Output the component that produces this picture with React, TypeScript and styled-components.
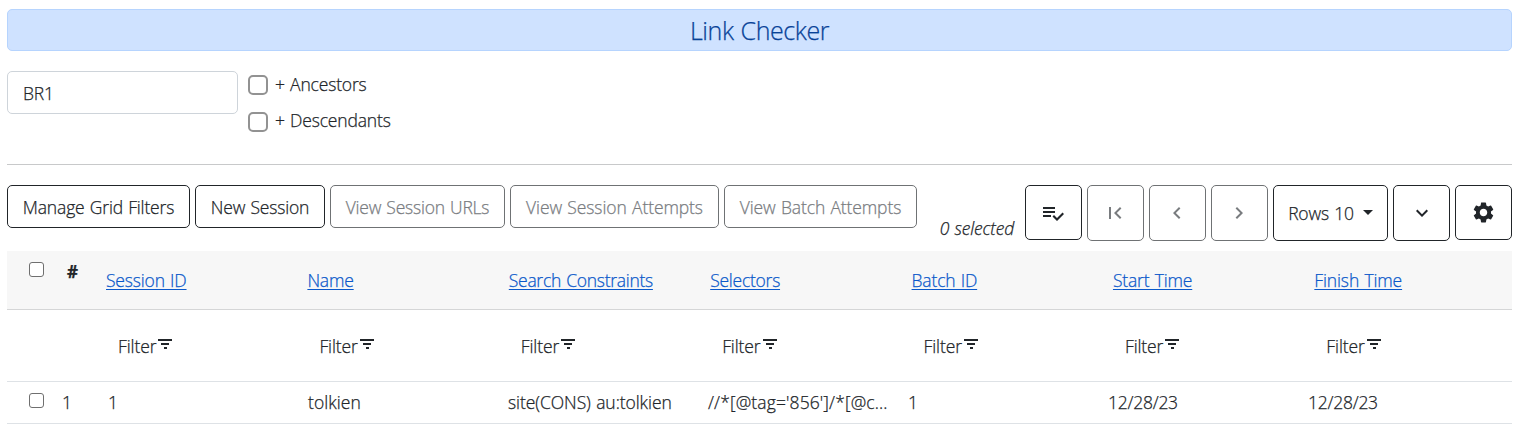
import React from "react";
import styled, { createGlobalStyle } from "styled-components";
import {
  MdFirstPage,
  MdKeyboardArrowLeft,
  MdKeyboardArrowRight,
  MdExpandMore,
  MdSettings,
} from "react-icons/md";

const GlobalStyle = createGlobalStyle`
  *, *::before, *::after { box-sizing: border-box; }
  body {
    margin: 0;
    background: #fff;
    color: #212529;
    font: 300 17.5px/26px "Open Sans", "Noto Sans", sans-serif;
    -webkit-text-stroke: 0.25px currentColor;
  }
  svg { -webkit-text-stroke: 0; }
`;

const Page = styled.main`
  width: 1529px;
  height: 432px;
  padding: 9px 17px 0 7px;
  overflow: hidden;
`;

const Text = styled.span<{ $ls?: number }>`
  white-space: nowrap;
  word-spacing: 0.9px;
  letter-spacing: ${(p) => p.$ls ?? -0.17}px;
`;

const Banner = styled.h1`
  display: flex;
  align-items: center;
  justify-content: center;
  height: 42px;
  margin: 0;
  padding: 0 0 1px;
  border: 1px solid #b6d4fe;
  border-radius: 5px;
  background: #cfe2ff;
  color: #084298;
  font-size: 25px;
  font-weight: 300;
`;

const OrgRow = styled.section`
  display: flex;
  align-items: flex-start;
  gap: 10px;
  height: 113px;
  padding-top: 20px;
`;

const OrgInput = styled.div`
  display: flex;
  align-items: center;
  width: 231px;
  height: 43px;
  padding: 1px 15px 0;
  border: 1px solid #ced4da;
  border-radius: 5px;
`;

const Options = styled.div`
  display: flex;
  flex-direction: column;
  gap: 11px;
  padding-top: 1px;
`;

const Option = styled.label`
  display: flex;
  align-items: center;
  gap: 7px;
  height: 26px;
  ${Text} { margin-top: -2px; }
  & + & ${Text} { margin-top: -4px; }
`;

const BigCheck = styled.i`
  width: 20px;
  height: 20px;
  border: 2px solid #929292;
  border-radius: 5px;
`;

const Toolbar = styled.section`
  display: flex;
  align-items: flex-start;
  gap: 5px;
  height: 87px;
  padding-top: 20px;
  border-top: 1px solid #c8c9ca;
`;

const Button = styled.button<{ $w: number; $h?: number; $muted?: boolean }>`
  display: flex;
  flex: none;
  align-items: center;
  justify-content: center;
  width: ${(p) => p.$w}px;
  height: ${(p) => p.$h ?? 43}px;
  padding: 0;
  border: 1px solid ${(p) => (p.$muted ? "#6f7274" : "#212529")};
  border-radius: 5px;
  background: #fff;
  color: ${(p) => (p.$muted ? "#797c7f" : "#212529")};
  font: inherit;
  -webkit-text-stroke: inherit;
  svg {
    flex: none;
    margin-right: ${(p) => (p.$muted ? 1 : 0)}px;
  }
`;

const Selected = styled.em`
  margin: 30px 6px 0 auto;
`;

const Caret = styled.i`
  margin: -2px 0 0 9px;
  border: 5px solid transparent;
  border-top-color: #212529;
  border-bottom: 0;
`;

const Row = styled.div<{ $h: number; $head?: boolean }>`
  display: flex;
  height: ${(p) => p.$h}px;
  border-bottom: 1px solid ${(p) => (p.$head ? "#d5d6d7" : "#dee2e6")};
  background: ${(p) => (p.$head ? "#f7f7f7" : "#fff")};
`;

const Lead = styled.div<{ $w: number; $x: number; $y: number }>`
  flex: none;
  width: ${(p) => p.$w}px;
  padding: ${(p) => p.$y}px 0 0 ${(p) => p.$x}px;
`;

const Check = styled.i`
  display: block;
  width: 15px;
  height: 15px;
  border: 1px solid #6f6f6f;
  border-radius: 3px;
  background: #fff;
`;

const Cell = styled.div<{ $w: number; $y: number; $x?: number }>`
  display: flex;
  flex: none;
  align-items: flex-start;
  width: ${(p) => p.$w}px;
  padding: ${(p) => p.$y}px 0 0 ${(p) => p.$x ?? 0}px;
`;

const SortLink = styled.a`
  color: #0a58ca;
  text-decoration: underline;
  text-decoration-thickness: 1px;
  text-underline-offset: 2px;
`;

const Hash = styled.b`
  font-size: 17px;
  font-weight: 700;
`;

const FilterGlyph = styled.svg`
  margin: 6px 0 0 2px;
`;

const FilterIcon = () => (
  <FilterGlyph width="14" height="10" viewBox="0 0 14 10" fill="currentColor" shapeRendering="crispEdges">
    <path d="M0 0h14v2H0zM3 4h8v2H3zM6 8h3v2H6z" />
  </FilterGlyph>
);

const SelectRowsIcon = () => (
  <svg width="25" height="24" viewBox="0 0 25 24" fill="currentColor">
    <path d="M14 10H2v2h12v-2zm0-4H2v2h12V6zM2 16h8v-2H2v2zm19.5-4.5L23 13l-6.99 7-4.51-4.5L13 14l3.01 3 5.49-5.5z" />
  </svg>
);

const columns: { label: string; ls?: number; value: string; valueLs?: number }[] = [
  { label: "Session ID", value: "1" },
  { label: "Name", value: "tolkien", valueLs: 0.05 },
  { label: "Search Constraints", ls: -0.28, value: "site(CONS) au:tolkien", valueLs: -0.07 },
  { label: "Selectors", ls: -0.25, value: "//*[@tag='856']/*[@c...", valueLs: 0.13 },
  { label: "Batch ID", value: "1" },
  { label: "Start Time", value: "12/28/23", valueLs: -0.25 },
  { label: "Finish Time", ls: -0.13, value: "12/28/23", valueLs: -0.25 },
];

export default function App() {
  return (
    <>
      <GlobalStyle />
      <Page>
        <Banner><Text $ls={-0.42}>Link Checker</Text></Banner>
        <OrgRow>
          <OrgInput><Text>BR1</Text></OrgInput>
          <Options>
            <Option><BigCheck /><Text>+ Ancestors</Text></Option>
            <Option><BigCheck /><Text>+ Descendants</Text></Option>
          </Options>
        </OrgRow>
        <Toolbar>
          <Button $w={183}><Text>Manage Grid Filters</Text></Button>
          <Button $w={130}><Text>New Session</Text></Button>
          <Button $w={175} $muted><Text $ls={-0.22}>View Session URLs</Text></Button>
          <Button $w={209} $muted><Text $ls={-0.1}>View Session Attempts</Text></Button>
          <Button $w={193} $muted><Text $ls={-0.12}>View Batch Attempts</Text></Button>
          <Selected><Text>0 selected</Text></Selected>
          <Button $w={57} $h={55}><SelectRowsIcon /></Button>
          <Button $w={57} $h={56} $muted><MdFirstPage size={24} /></Button>
          <Button $w={57} $h={56} $muted><MdKeyboardArrowLeft size={24} /></Button>
          <Button $w={57} $h={56} $muted><MdKeyboardArrowRight size={24} /></Button>
          <Button $w={115} $h={56}><Text>Rows 10</Text><Caret /></Button>
          <Button $w={57} $h={56}><MdExpandMore size={24} /></Button>
          <Button $w={57} $h={55}><MdSettings size={25} /></Button>
        </Toolbar>
        <Row $h={59} $head>
          <Lead $w={60} $x={22} $y={11}><Check /></Lead>
          <Lead $w={39} $x={0} $y={7}><Hash>#</Hash></Lead>
          {columns.map((c) => (
            <Cell key={c.label} $w={201.4} $y={16}>
              <SortLink><Text $ls={c.ls}>{c.label}</Text></SortLink>
            </Cell>
          ))}
        </Row>
        <Row $h={72}>
          <Lead $w={99} $x={0} $y={0} />
          {columns.map((c) => (
            <Cell key={c.label} $w={201.4} $y={23} $x={12}>
              <Text $ls={-0.1}>Filter</Text><FilterIcon />
            </Cell>
          ))}
        </Row>
        <Row $h={42}>
          <Lead $w={55} $x={22} $y={11}><Check /></Lead>
          <Lead $w={46} $x={0} $y={7}><Text>1</Text></Lead>
          {columns.map((c) => (
            <Cell key={c.label} $w={200} $y={7}>
              <Text $ls={c.valueLs}>{c.value}</Text>
            </Cell>
          ))}
        </Row>
      </Page>
    </>
  );
}
